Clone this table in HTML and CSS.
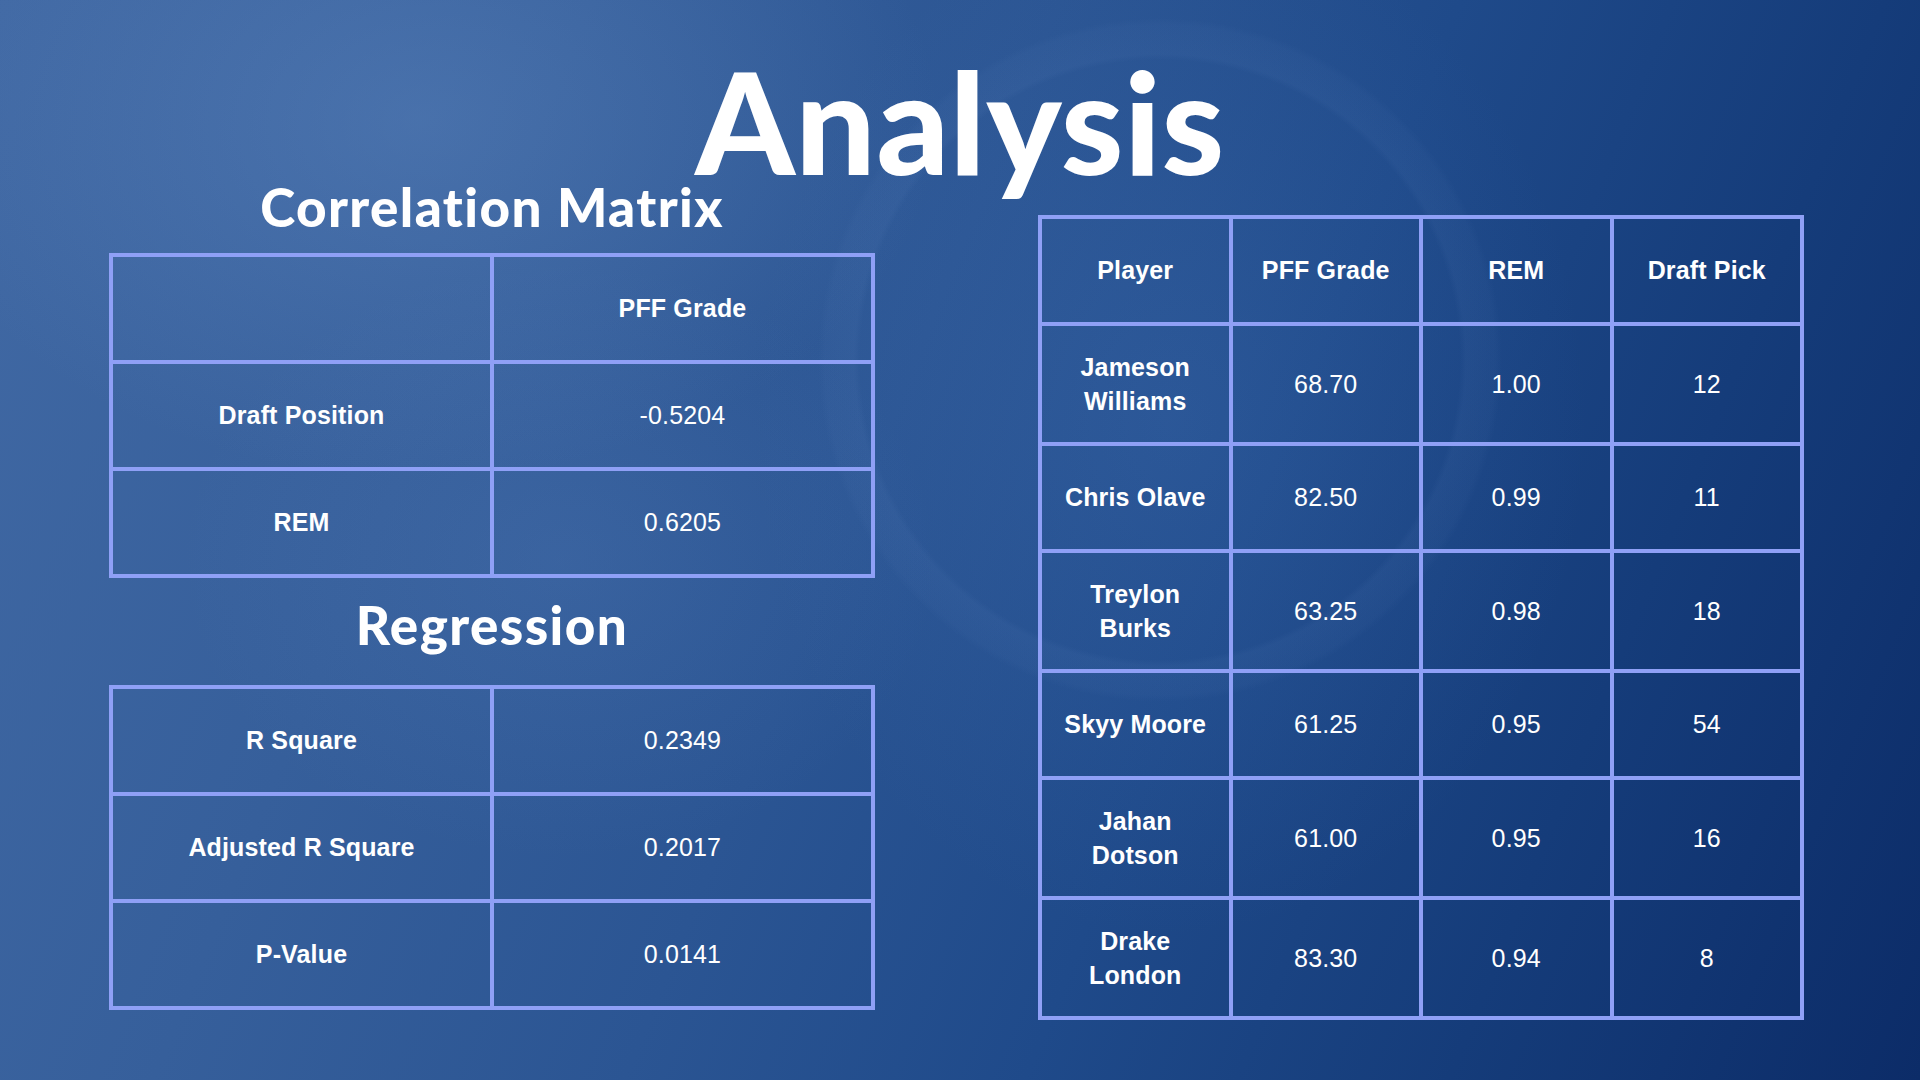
FILE: index.html
```html
<!DOCTYPE html>
<html lang="en">
<head>
<meta charset="utf-8">
<title>Analysis</title>
<link rel="stylesheet" href="styles.css">
</head>
<body>
<main class="slide">
  <h1 class="title">Analysis</h1>
  <div class="columns">
    <section class="left">
      <h2 class="heading">Correlation Matrix</h2>
      <div class="tbl two first-table">
        <div class="cell"></div>
        <div class="cell b">PFF Grade</div>
        <div class="cell b">Draft Position</div>
        <div class="cell">-0.5204</div>
        <div class="cell b">REM</div>
        <div class="cell">0.6205</div>
      </div>
      <h2 class="heading reg">Regression</h2>
      <div class="tbl two second-table">
        <div class="cell b">R Square</div>
        <div class="cell">0.2349</div>
        <div class="cell b">Adjusted R Square</div>
        <div class="cell">0.2017</div>
        <div class="cell b">P-Value</div>
        <div class="cell">0.0141</div>
      </div>
    </section>
    <section class="right">
      <div class="tbl four">
        <div class="cell b">Player</div>
        <div class="cell b">PFF Grade</div>
        <div class="cell b">REM</div>
        <div class="cell b">Draft Pick</div>

        <div class="cell b">Jameson Williams</div>
        <div class="cell">68.70</div>
        <div class="cell">1.00</div>
        <div class="cell">12</div>

        <div class="cell b">Chris Olave</div>
        <div class="cell">82.50</div>
        <div class="cell">0.99</div>
        <div class="cell">11</div>

        <div class="cell b">Treylon Burks</div>
        <div class="cell">63.25</div>
        <div class="cell">0.98</div>
        <div class="cell">18</div>

        <div class="cell b">Skyy Moore</div>
        <div class="cell">61.25</div>
        <div class="cell">0.95</div>
        <div class="cell">54</div>

        <div class="cell b">Jahan Dotson</div>
        <div class="cell">61.00</div>
        <div class="cell">0.95</div>
        <div class="cell">16</div>

        <div class="cell b">Drake London</div>
        <div class="cell">83.30</div>
        <div class="cell">0.94</div>
        <div class="cell">8</div>
      </div>
    </section>
  </div>
</main>
</body>
</html>
```
FILE: styles.css
```css
html, body {
  margin: 0;
  padding: 0;
}

body {
  width: 1920px;
  height: 1080px;
  overflow: hidden;
  font-family: "Liberation Sans", Arial, sans-serif;
  color: #ffffff;
}

.slide {
  box-sizing: border-box;
  width: 1920px;
  height: 1080px;
  padding-top: 63px;
  background:
    radial-gradient(circle at 1160px 360px, rgba(255,255,255,0) 300px, rgba(140,175,230,0.05) 306px, rgba(140,175,230,0.035) 335px, rgba(255,255,255,0) 342px),
    radial-gradient(ellipse 420px 520px at 1170px 420px, rgba(90,140,210,0.16), rgba(90,140,210,0) 100%),
    radial-gradient(ellipse 520px 360px at 420px 120px, rgba(110,150,205,0.30), rgba(110,150,205,0) 100%),
    radial-gradient(ellipse 380px 300px at 560px 560px, rgba(110,150,210,0.14), rgba(110,150,210,0) 100%),
    linear-gradient(112deg, #4169a4 0%, #365f9b 25%, #2b5593 45%, #1f4a8a 62%, #153c7a 80%, #0c2c68 100%);
}

.title {
  margin: 0;
  text-align: center;
  font-family: Lato, "Open Sans", sans-serif;
  font-weight: 900;
  font-size: 142px;
  line-height: 114px;
  letter-spacing: 0.5px;
}

.columns {
  display: flex;
  align-items: flex-start;
  gap: 163px;
  margin-top: 3px;
  padding-left: 109px;
}

.left {
  width: 766px;
}

.heading {
  margin: 0;
  text-align: center;
  font-family: Lato, "Open Sans", sans-serif;
  font-weight: 900;
  font-size: 53px;
  line-height: 53px;
  letter-spacing: 1.4px;
}

.first-table {
  margin-top: 20px;
}

.heading.reg {
  margin-top: 20px;
}

.second-table {
  margin-top: 34px;
}

.right {
  width: 766px;
  margin-top: 35px;
}

.tbl {
  display: grid;
  border-top: 4px solid #8fa0f6;
  border-left: 4px solid #8fa0f6;
}

.tbl.two {
  grid-template-columns: 1fr 1fr;
}

.tbl.four {
  grid-template-columns: repeat(4, 1fr);
}

.cell {
  box-sizing: border-box;
  min-height: 107px;
  display: flex;
  align-items: center;
  justify-content: center;
  text-align: center;
  padding: 23.5px 18px;
  border-right: 4px solid #8fa0f6;
  border-bottom: 4px solid #8fa0f6;
  font-size: 25px;
  line-height: 34.5px;
  letter-spacing: 0.15px;
  font-weight: 400;
}

.cell.b {
  font-weight: 700;
}
```
